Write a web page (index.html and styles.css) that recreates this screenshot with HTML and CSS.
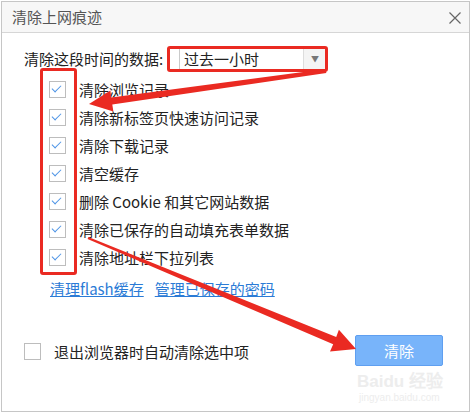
FILE: index.html
```html
<!DOCTYPE html>
<html lang="zh-CN">
<head>
    <meta charset="UTF-8">
    <title>清除上网痕迹</title>
    <link rel="stylesheet" href="styles.css">
</head>
<body>
    <div class="dialog">
        <div class="titlebar">
            <span class="title">清除上网痕迹</span>
            <svg class="close" width="12" height="12" viewBox="0 0 12 12">
                <path d="M0.5 0.5 L11.5 11.5 M11.5 0.5 L0.5 11.5" stroke="#666" stroke-width="1.2" fill="none"/>
            </svg>
        </div>
        <div class="content">
            <div class="time-row">
                <span class="time-label">清除这段时间的数据:</span>
                <div class="select">
                    <span class="select-value">过去一小时</span>
                    <span class="select-arrow">▼</span>
                </div>
            </div>

            <ul class="options">
                <li class="option"><span class="check on"></span>清除浏览记录</li>
                <li class="option"><span class="check on"></span>清除新标签页快速访问记录</li>
                <li class="option"><span class="check on"></span>清除下载记录</li>
                <li class="option"><span class="check on"></span>清空缓存</li>
                <li class="option"><span class="check on"></span>删除 Cookie 和其它网站数据</li>
                <li class="option"><span class="check on"></span>清除已保存的自动填充表单数据</li>
                <li class="option"><span class="check on"></span>清除地址栏下拉列表</li>
            </ul>

            <div class="links">
                <a href="#">清理flash缓存</a>
                <a href="#">管理已保存的密码</a>
            </div>

            <div class="footer">
                <label class="auto-clear"><span class="check"></span>退出浏览器时自动清除选中项</label>
                <button class="clear-button">清除</button>
            </div>
        </div>

        <div class="watermark">
            <div class="wm-logo">Baidu 经验</div>
            <div class="wm-url">jingyan.baidu.com</div>
        </div>
    </div>

    <!-- annotations drawn over the screenshot -->
    <div class="mark mark-select"></div>
    <div class="mark mark-checks"></div>
    <svg class="arrows" width="472" height="414" viewBox="0 0 472 414">
        <polygon fill="#ea2a22" points="325.7,69 111.3,97.5 110.4,90.5 89,104 113.4,111.5 112.3,104.5 326.3,73"/>
        <polygon fill="#ea2a22" points="88.4,237.1 336.2,336.9 338.9,329.8 356,349 330,351.5 333.2,344.3 87.6,238.9"/>
    </svg>
</body>
</html>
```

FILE: styles.css
```css
body {
    margin: 1px;
    background: #fff;
    font-family: "Noto Sans CJK SC", "Microsoft YaHei", sans-serif;
    font-size: 15px;
    color: #222;
}

.dialog {
    position: relative;
    width: 467px;
    height: 409px;
    border: 1px solid #c6c6c6;
    background: #fff;
}

.titlebar {
    display: flex;
    align-items: center;
    justify-content: space-between;
    height: 30px;
    padding: 0 8px 0 10px;
    background: #f7f7f7;
    border-bottom: 1px solid #d6d6d6;
}

.title {
    color: #555;
    font-size: 15px;
    line-height: 30px;
}

.close {
    margin-top: 2px;
}

.content {
    padding: 0 26px 0 22px;
}

.time-row {
    display: flex;
    align-items: center;
    height: 24px;
    margin-top: 14px;
}

.time-label {
    width: 155px;
    line-height: 24px;
}

.select {
    display: flex;
    width: 146px;
    height: 22px;
    border: 1px solid #cacaca;
}

.select-value {
    flex: 1;
    padding-left: 4px;
    line-height: 22px;
    color: #222;
}

.select-arrow {
    width: 22px;
    border-left: 1px solid #ddd;
    background: #f4f4f4;
    color: #777;
    font-size: 8px;
    line-height: 22px;
    text-align: center;
}

.options {
    list-style: none;
    margin: 4px 0 0 25px;
    padding: 0;
}

.option {
    display: flex;
    align-items: center;
    height: 28px;
}

.check {
    position: relative;
    flex: none;
    width: 15px;
    height: 15px;
    margin-right: 13px;
    border: 1px solid #bdbdbd;
    background: #fff;
}

.check.on::after {
    content: "";
    position: absolute;
    left: 4px;
    top: 1px;
    width: 4px;
    height: 8px;
    border-right: 1px solid #4d94e6;
    border-bottom: 1px solid #4d94e6;
    transform: rotate(45deg);
}

.links {
    display: flex;
    gap: 11px;
    margin: 8px 0 0 26px;
    line-height: 20px;
}

.links a {
    color: #2b7bd6;
    text-decoration: underline;
}

.footer {
    display: flex;
    align-items: center;
    justify-content: space-between;
    margin-top: 36px;
    height: 31px;
}

.auto-clear {
    display: flex;
    align-items: center;
    margin-top: 2px;
}

.clear-button {
    width: 88px;
    height: 31px;
    border: 1px solid #5f9ff0;
    border-radius: 2px;
    background: #78b4fa;
    color: #fff;
    font-family: inherit;
    font-size: 15px;
}

.watermark {
    position: absolute;
    left: 355px;
    top: 371px;
    color: #ededed;
    white-space: nowrap;
    font-family: "Liberation Sans", Arial, sans-serif;
}

.wm-logo {
    font-size: 17px;
    font-weight: bold;
    line-height: 18px;
}

.wm-url {
    font-size: 10px;
    line-height: 14px;
    padding-left: 2px;
}

.mark {
    position: absolute;
    border: 3px solid #ea2a22;
    border-radius: 3px;
}

.mark-select {
    left: 167px;
    top: 46px;
    width: 155px;
    height: 20px;
}

.mark-checks {
    left: 40px;
    top: 68px;
    width: 31px;
    height: 201px;
}

.arrows {
    position: absolute;
    left: 0;
    top: 0;
    pointer-events: none;
}
```
